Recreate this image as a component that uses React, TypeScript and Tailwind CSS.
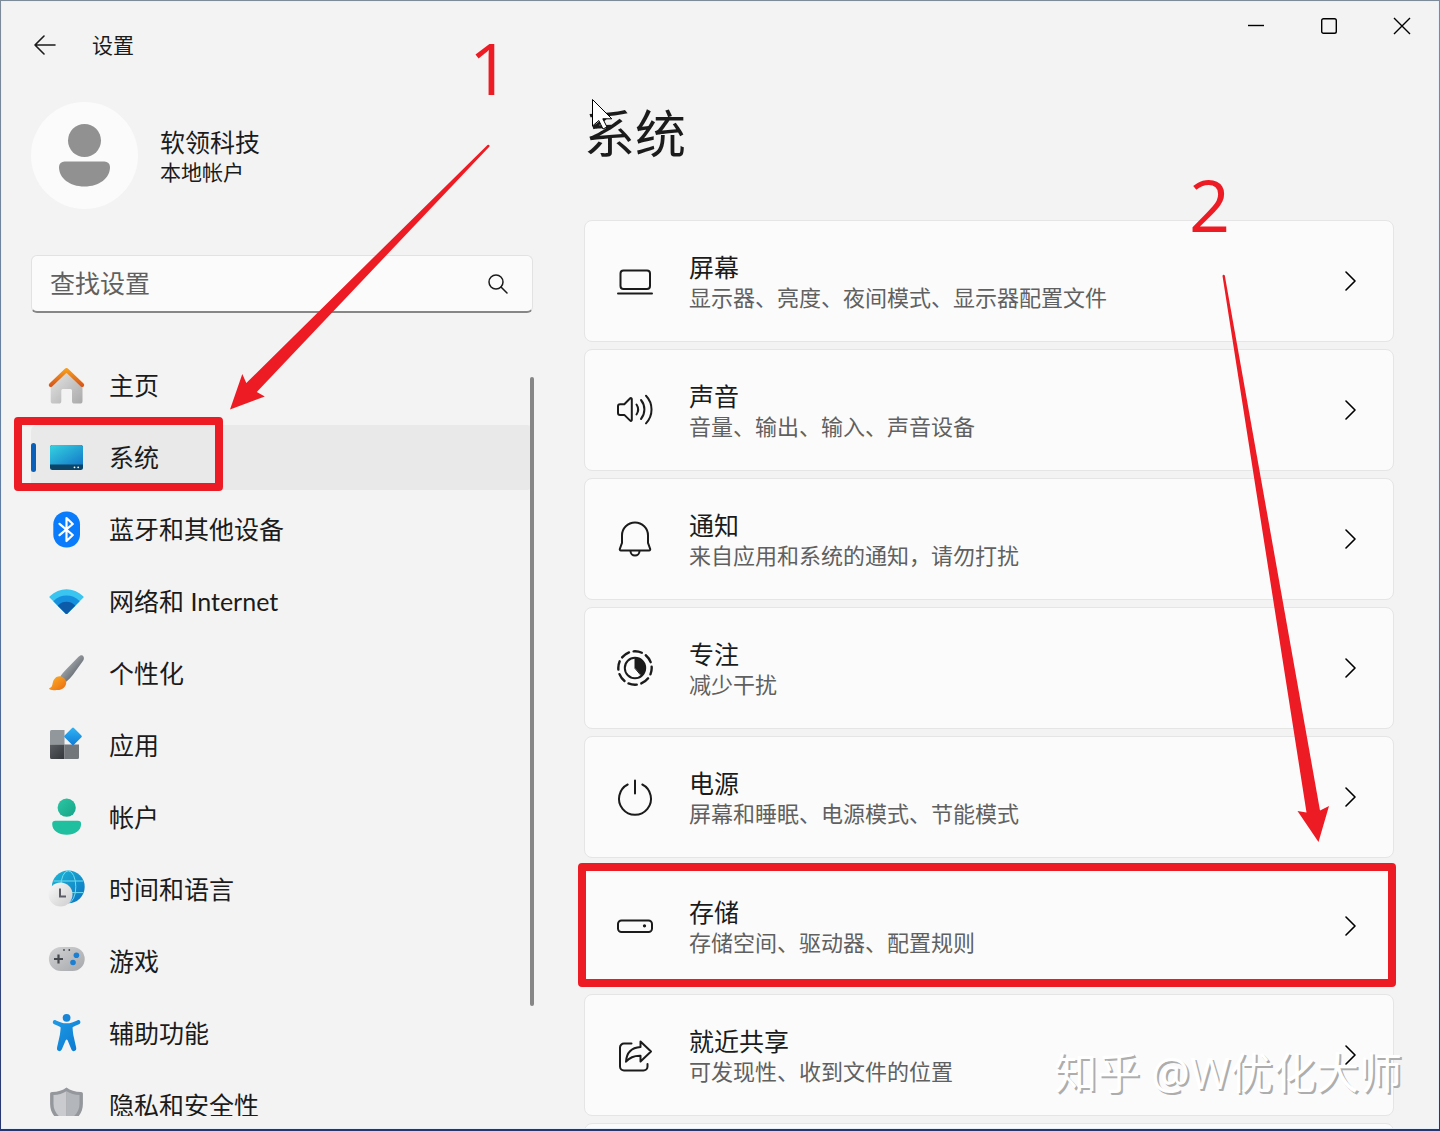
import type { ReactNode } from "react";

function HomeIcon() {
  return (
    <svg viewBox="0 0 36 36" className="size-9 overflow-visible" aria-hidden="true">
      <defs>
        <linearGradient id="homeWall" x1="0" y1="0" x2="1" y2="1">
          <stop offset="0" stopColor="#e6e6e6" />
          <stop offset="1" stopColor="#a9a9a9" />
        </linearGradient>
        <linearGradient id="homeRoof" x1="0" y1="0" x2="0" y2="1">
          <stop offset="0" stopColor="#f59a1c" />
          <stop offset="1" stopColor="#d9591b" />
        </linearGradient>
      </defs>
      <path
        d="M18.5 4 34.5 19v14a2.6 2.6 0 0 1-2.6 2.6h-5.3A2.6 2.6 0 0 1 24 33V22.5a1.5 1.5 0 0 0-1.5-1.5h-7.7a1.5 1.5 0 0 0-1.5 1.5V33a2.6 2.6 0 0 1-2.6 2.6H5.3A2.6 2.6 0 0 1 2.7 33V19z"
        fill="url(#homeWall)"
      />
      <path
        d="M2.8 17 18.5 2 34.2 17"
        fill="none"
        stroke="url(#homeRoof)"
        strokeWidth="4"
        strokeLinecap="round"
        strokeLinejoin="round"
      />
    </svg>
  );
}

function SystemIcon() {
  return (
    <svg viewBox="0 0 36 36" className="size-9 overflow-visible" aria-hidden="true">
      <defs>
        <linearGradient id="sysScreen" x1="0" y1="0" x2="1" y2="1">
          <stop offset="0" stopColor="#35d3e0" />
          <stop offset="1" stopColor="#1479c9" />
        </linearGradient>
      </defs>
      <rect x="2" y="5" width="33" height="25" rx="2.5" fill="#0c4467" />
      <path d="M2 24.5v-17A2.5 2.5 0 0 1 4.5 5h28A2.5 2.5 0 0 1 35 7.5v17z" fill="url(#sysScreen)" />
      <circle cx="26.5" cy="27.3" r="0.9" fill="#fff" />
      <circle cx="30.2" cy="27.3" r="0.9" fill="#fff" />
    </svg>
  );
}

function BluetoothIcon() {
  return (
    <svg viewBox="0 0 36 36" className="size-9 overflow-visible" aria-hidden="true">
      <rect x="5.3" y="-0.5" width="26.7" height="36" rx="13" fill="#0a7bfa" />
      <path
        d="M11.5 11.8 24.8 23l-6.3 6V6l6.3 6L11.5 23.2"
        fill="none"
        stroke="#fff"
        strokeWidth="2.2"
        strokeLinejoin="round"
        strokeLinecap="round"
      />
    </svg>
  );
}

function WifiIcon() {
  return (
    <svg viewBox="0 0 36 36" className="size-9 overflow-visible" aria-hidden="true">
      <defs>
        <clipPath id="wifiFan">
          <path d="M1.8 13.8a1 1 0 0 1 0-1.5C11.5 3 25.5 3 35.2 12.3a1 1 0 0 1 0 1.5L19.5 29.4a1.4 1.4 0 0 1-2 0z" />
        </clipPath>
      </defs>
      <g clipPath="url(#wifiFan)">
        <rect width="37" height="36" fill="#3ac4f0" />
        <circle cx="18.5" cy="29.5" r="18" fill="#1490df" />
        <circle cx="18.5" cy="29.5" r="11.8" fill="#0d5aa8" />
      </g>
    </svg>
  );
}

function BrushIcon() {
  return (
    <svg viewBox="0 0 36 36" className="size-9 overflow-visible" aria-hidden="true">
      <defs>
        <linearGradient id="brushHandle" x1="0" y1="0" x2="1" y2="1">
          <stop offset="0.3" stopColor="#a3a8ad" />
          <stop offset="0.7" stopColor="#686d73" />
        </linearGradient>
        <linearGradient id="brushTip" x1="0" y1="0" x2="1" y2="1">
          <stop offset="0" stopColor="#fdb326" />
          <stop offset="1" stopColor="#ea6a12" />
        </linearGradient>
      </defs>
      <path
        d="M34.8-.3c1.5 1.3 1.4 3.2.3 5L25 18.8c-2 2.5-4.3 4.9-6.8 7l-5.9-5.5C14 17.8 16 15.5 18.3 13.3L30.5.8c1.5-1.5 3-2.1 4.3-1.1z"
        fill="url(#brushHandle)"
      />
      <path
        d="M12.2 20.2c3.2.5 5.5 2.7 6 5.7.2 4.5-3.5 8-9 8.2-3 .2-6-.1-7.7-.9-.6-.4-.4-1 .2-1.2 2.2-.8 2.5-2.5 3-5 .8-4.3 3.8-7.2 7.5-6.8z"
        fill="url(#brushTip)"
      />
    </svg>
  );
}

function AppsIcon() {
  return (
    <svg viewBox="0 0 36 36" className="size-9 overflow-visible" aria-hidden="true">
      <defs>
        <linearGradient id="appsDiamond" x1="0" y1="0" x2="1" y2="1">
          <stop offset="0" stopColor="#31b5f5" />
          <stop offset="1" stopColor="#0f7bd6" />
        </linearGradient>
        <linearGradient id="appsDark" x1="0" y1="0" x2="1" y2="1">
          <stop offset="0" stopColor="#595c60" />
          <stop offset="1" stopColor="#33363a" />
        </linearGradient>
      </defs>
      <path d="M3.5 2h13v14.5H2v-13A1.5 1.5 0 0 1 3.5 2z" fill="#92979c" />
      <path d="M2 16.5h14.5V31h-13A1.5 1.5 0 0 1 2 29.5z" fill="url(#appsDark)" />
      <path d="M16.5 16.5H31v13a1.5 1.5 0 0 1-1.5 1.5h-13z" fill="#72777c" />
      <rect
        x="18.4"
        y="1.8"
        width="13.2"
        height="13.2"
        rx="1.3"
        transform="rotate(45 25 8.4)"
        fill="url(#appsDiamond)"
      />
    </svg>
  );
}

function AccountIcon() {
  return (
    <svg viewBox="0 0 36 36" className="size-9 overflow-visible" aria-hidden="true">
      <defs>
        <linearGradient id="accountFill" x1="0" y1="0" x2="1" y2="1">
          <stop offset="0" stopColor="#2bc7a4" />
          <stop offset="1" stopColor="#17a387" />
        </linearGradient>
      </defs>
      <circle cx="18.7" cy="7.7" r="9.1" fill="url(#accountFill)" />
      <path
        d="M7.5 20.7h22.3a3.3 3.3 0 0 1 3.3 3.3c0 6.5-6 10.7-14.4 10.7S4.2 30.5 4.2 24a3.3 3.3 0 0 1 3.3-3.3z"
        fill="#1fbf9f"
      />
    </svg>
  );
}

function TimeIcon() {
  return (
    <svg viewBox="0 0 36 36" className="size-9 overflow-visible" aria-hidden="true">
      <defs>
        <linearGradient id="globeFill" x1="0" y1="0" x2="1" y2="1">
          <stop offset="0" stopColor="#20b8d4" />
          <stop offset="1" stopColor="#0b72c4" />
        </linearGradient>
        <linearGradient id="clockFill" x1="0" y1="0" x2="1" y2="1">
          <stop offset="0" stopColor="#fafafa" />
          <stop offset="1" stopColor="#cdcdcf" />
        </linearGradient>
      </defs>
      <circle cx="20.3" cy="14.8" r="16.4" fill="url(#globeFill)" />
      <g fill="none" stroke="#6fdcf0" strokeWidth="1">
        <ellipse cx="20.3" cy="14.8" rx="7.5" ry="16" />
        <path d="M5.5 9h29.8M5.5 20.6h29.8" />
      </g>
      <circle cx="12.5" cy="22.5" r="12" fill="url(#clockFill)" />
      <path d="M12 16.5v8h6" fill="none" stroke="#5c5c66" strokeWidth="2" />
    </svg>
  );
}

function GameIcon() {
  return (
    <svg viewBox="0 0 36 36" className="size-9 overflow-visible" aria-hidden="true">
      <defs>
        <linearGradient id="padFill" x1="0" y1="0" x2="1" y2="1">
          <stop offset="0" stopColor="#d2d3d5" />
          <stop offset="1" stopColor="#a5a7aa" />
        </linearGradient>
      </defs>
      <rect x="0.9" y="3" width="35.8" height="24" rx="12" fill="url(#padFill)" />
      <path d="M6 15h9M10.5 10.5v9" stroke="#45484c" strokeWidth="2.2" />
      <circle cx="28.4" cy="11.3" r="2.8" fill="#1c7fd1" />
      <circle cx="25" cy="18.5" r="2.8" fill="#1c7fd1" />
      <circle cx="16" cy="6" r="0.9" fill="#45484c" />
      <circle cx="21.3" cy="6" r="0.9" fill="#45484c" />
    </svg>
  );
}

function AccessibilityIcon() {
  return (
    <svg viewBox="0 0 36 36" className="size-9 overflow-visible" aria-hidden="true">
      <defs>
        <linearGradient id="accessFill" x1="0" y1="0" x2="1" y2="1">
          <stop offset="0" stopColor="#1f9be6" />
          <stop offset="1" stopColor="#0b78d0" />
        </linearGradient>
      </defs>
      <circle cx="18.6" cy="1.8" r="3.9" fill="#1786d8" />
      <path
        d="M5 5.3c.5-1.2 1.8-1.5 3-.9 3.3 1.5 6.8 2.9 10.6 2.9S26 5.9 29.2 4.4c1.2-.6 2.5-.3 3 .9.5 1.3 0 2.5-1.2 3-2.2 1-4 1.8-5.6 2.4-.7.3-.9.8-.8 1.5.3 3.3.5 6.3 1.3 9.3l2.2 9.8c.5 2-.2 3.4-1.7 3.8-1.6.3-2.7-.6-3.3-2.3l-3.5-8.6c-.4-.9-1.5-.9-1.9 0l-3.6 8.6c-.7 1.7-1.8 2.6-3.3 2.3-1.5-.4-2.2-1.8-1.7-3.8l2.2-9.8c.8-3 1-6 1.3-9.3.1-.7-.1-1.2-.8-1.5-1.6-.6-3.4-1.4-5.6-2.4-1.2-.5-1.7-1.7-1.2-3z"
        fill="url(#accessFill)"
      />
    </svg>
  );
}

function ShieldIcon() {
  return (
    <svg viewBox="0 0 36 36" className="size-9 overflow-visible" aria-hidden="true">
      <path
        d="M18.5-.5c4 3 8.5 4.3 14.5 4.5 1.2 0 1.9.7 1.9 1.9V16c0 9.5-6 16.5-16.4 20C8 32.5 2.1 25.5 2.1 16V5.9C2.1 4.7 2.8 4 4 4c6-.2 10.5-1.5 14.5-4.5z"
        fill="#94979b"
      />
      <path d="M18.5 3.2c-4 2.4-8 3.5-13 3.8V16c0 7.5 4.6 13.3 13 16.5z" fill="#c9cbce" />
      <path d="M18.5 3.2c4 2.4 8 3.5 13 3.8V16c0 7.5-4.6 13.3-13 16.5z" fill="#b3b6ba" />
    </svg>
  );
}

function LineIcon({ children }: { children: ReactNode }) {
  return (
    <svg
      viewBox="0 0 36 36"
      className="size-9 shrink-0 overflow-visible"
      fill="none"
      stroke="#1b1b1b"
      strokeWidth="2"
      strokeLinecap="round"
      strokeLinejoin="round"
      aria-hidden="true"
    >
      {children}
    </svg>
  );
}

const displayIcon = (
  <LineIcon>
    <rect x="3.5" y="7.5" width="29.5" height="18.5" rx="3" />
    <path d="M1 30.5h34" />
  </LineIcon>
);

const soundIcon = (
  <LineIcon>
    <path d="M7.3 12.3H3a2 2 0 0 0-2 2v6.6a2 2 0 0 0 2 2h4.3l5.9 5.7c.6.6 1.6.2 1.6-.7V7c0-.9-1-1.3-1.6-.7z" />
    <path d="M19.5 12.500a9 9 0 0 1 0 10M24 8a15 15 0 0 1 0 19M29 3.800a20 20 0 0 1 0 27.600" />
  </LineIcon>
);

const bellIcon = (
  <LineIcon>
    <path d="M18 1.5a13 13 0 0 0-13 13v7.3L2.8 28c-.2.7.2 1.4 1 1.4h28.4c.8 0 1.2-.7 1-1.4L31 21.8v-7.3a13 13 0 0 0-13-13z" />
    <path d="M13.5 30a4.5 4.5 0 0 0 9 0" />
  </LineIcon>
);

const focusIcon = (
  <LineIcon>
    <circle cx="18" cy="18" r="16.7" strokeWidth="2.4" strokeDasharray="8.5 4.62" strokeDashoffset="2" />
    <circle cx="18" cy="18" r="10.2" />
    <path d="M18 18V8a10 10 0 0 1 6.5 17.5z" fill="#1b1b1b" strokeWidth="1" />
  </LineIcon>
);

const powerIcon = (
  <LineIcon>
    <path d="M18 1.5v13M10.7 5.5a16 16 0 1 0 14.6 0" />
  </LineIcon>
);

const storageIcon = (
  <LineIcon>
    <rect x="1" y="12.5" width="34" height="11.5" rx="3.5" />
    <circle cx="27.5" cy="17.8" r="0.9" fill="#1b1b1b" strokeWidth="1.5" />
  </LineIcon>
);

const shareIcon = (
  <LineIcon>
    <path d="M14.5 6.5H7a4 4 0 0 0-4 4v19a4 4 0 0 0 4 4h19.5a4 4 0 0 0 4-4V27" />
    <path d="M23.5 4.5 34 14.5l-10.500 10v-5.800c-6-.2-10.5 1.300-14.500 6 .5-9 5.500-14.200 14.500-14.800z" />
  </LineIcon>
);

const navItems = [
  { label: "主页", icon: <HomeIcon /> },
  { label: "系统", icon: <SystemIcon />, active: true },
  { label: "蓝牙和其他设备", icon: <BluetoothIcon /> },
  { label: "网络和 Internet", icon: <WifiIcon /> },
  { label: "个性化", icon: <BrushIcon /> },
  { label: "应用", icon: <AppsIcon /> },
  { label: "帐户", icon: <AccountIcon /> },
  { label: "时间和语言", icon: <TimeIcon /> },
  { label: "游戏", icon: <GameIcon /> },
  { label: "辅助功能", icon: <AccessibilityIcon /> },
  { label: "隐私和安全性", icon: <ShieldIcon /> },
];

const cards = [
  { title: "屏幕", desc: "显示器、亮度、夜间模式、显示器配置文件", icon: displayIcon },
  { title: "声音", desc: "音量、输出、输入、声音设备", icon: soundIcon },
  { title: "通知", desc: "来自应用和系统的通知，请勿打扰", icon: bellIcon },
  { title: "专注", desc: "减少干扰", icon: focusIcon },
  { title: "电源", desc: "屏幕和睡眠、电源模式、节能模式", icon: powerIcon },
  { title: "存储", desc: "存储空间、驱动器、配置规则", icon: storageIcon, marked: true },
  { title: "就近共享", desc: "可发现性、收到文件的位置", icon: shareIcon },
];

function TitleBar() {
  return (
    <header className="flex h-[86px] shrink-0 items-start justify-between">
      <div className="flex h-[86px] items-center gap-9 pl-8">
        <button type="button" aria-label="返回">
          <svg viewBox="0 0 22 20" className="h-5 w-[22px]" fill="none" stroke="#1b1b1b" strokeWidth="1.6" strokeLinecap="round" strokeLinejoin="round">
            <path d="M21 10H1M10 1 1 10l9 9" />
          </svg>
        </button>
        <span className="text-[21px]">设置</span>
      </div>
      <div className="flex">
        <button type="button" aria-label="最小化" className="flex h-12 w-[73px] items-center justify-center">
          <svg viewBox="0 0 16 16" className="size-4" stroke="#000" strokeWidth="1.4">
            <path d="M0 7.5h16" />
          </svg>
        </button>
        <button type="button" aria-label="最大化" className="flex h-12 w-[73px] items-center justify-center">
          <svg viewBox="0 0 16 16" className="size-4" fill="none" stroke="#000" strokeWidth="1.4">
            <rect x="0.7" y="0.7" width="14.6" height="14.6" rx="1.8" />
          </svg>
        </button>
        <button type="button" aria-label="关闭" className="flex h-12 w-[73px] items-center justify-center">
          <svg viewBox="0 0 16 16" className="size-4 overflow-visible" stroke="#000" strokeWidth="1.4">
            <path d="M0 0l16 16M16 0 0 16" />
          </svg>
        </button>
      </div>
    </header>
  );
}

function Sidebar() {
  return (
    <aside className="flex w-[502px] shrink-0 flex-col pb-3">
      <div className="mt-3.5 flex items-center gap-[22px]">
        <div className="flex size-[107px] items-center justify-center rounded-full bg-[#fbfbfb]">
          <svg viewBox="0 0 52 64" className="h-16 w-[52px]" fill="#919191" aria-hidden="true">
            <circle cx="25.5" cy="16.5" r="16.5" />
            <path d="M5.5 37.5h40a5.500 5.500 0 0 1 5.500 5.500c0 11-10.500 19.500-25.500 19.500S0 54 0 43a5.500 5.500 0 0 1 5.500-5.500z" />
          </svg>
        </div>
        <div>
          <p className="text-[25px] leading-8">软领科技</p>
          <p className="text-[21px] leading-7">本地帐户</p>
        </div>
      </div>

      <div className="mt-[46px] flex h-[58px] shrink-0 items-center rounded-md border border-[#e2e2e2] border-b-2 border-b-[#868686] bg-[#fbfbfb] pr-6 pl-[18px]">
        <input
          type="text"
          aria-label="查找设置"
          placeholder="查找设置"
          className="min-w-0 flex-1 bg-transparent text-[25px] outline-none placeholder:text-[#606060]"
        />
        <svg viewBox="0 0 20 20" className="size-5" fill="none" stroke="#1b1b1b" strokeWidth="1.5" strokeLinecap="round" aria-hidden="true">
          <circle cx="8" cy="8" r="7" />
          <path d="M13 13l6 6" />
        </svg>
      </div>

      {/* Navigation */}
      <div className="relative mt-6 flex min-h-0 flex-1">
        <nav className="-mx-5 flex flex-1 flex-col gap-[7px] overflow-hidden px-5 pt-4">
          {navItems.map((item) => (
            <a
              key={item.label}
              href="#"
              className={`relative flex h-[65px] shrink-0 items-center gap-[25px] rounded-md pl-[17px] text-[25px] leading-7 ${
                item.active ? "bg-[#e9e9e9]" : ""
              }`}
            >
              {item.icon}
              <span className="pb-0.5">{item.label}</span>
              {item.active && (
                <>
                  <span className="absolute top-[18px] left-0 h-[29px] w-[5px] rounded-full bg-[#0a5fb8]" />
                  <span className="absolute -top-2 -left-[17px] h-[74px] w-[209px] rounded border-8 border-[#ed1c24]" />
                </>
              )}
            </a>
          ))}
        </nav>
        <div className="absolute top-10 -right-px h-[629px] w-1 rounded-full bg-[#868686]" />
      </div>
    </aside>
  );
}

function SettingCard({ title, desc, icon, marked }: { title: string; desc: string; icon: ReactNode; marked?: boolean }) {
  return (
    <a
      href="#"
      className="relative flex h-[122px] shrink-0 items-center gap-9 rounded-lg border border-[#e5e5e5] bg-[#fbfbfb] pr-9 pl-8"
    >
      {icon}
      <div className="flex-1 pt-0.5">
        <p className="text-[25px] leading-8">{title}</p>
        <p className="text-[22px] leading-[30px] text-[#606060]">{desc}</p>
      </div>
      <svg viewBox="0 0 12 20" className="h-5 w-3" fill="none" stroke="#000" strokeWidth="1.6" strokeLinecap="round" strokeLinejoin="round" aria-hidden="true">
        <path d="M1 1 10 10l-9 9" />
      </svg>
      {marked && <span className="absolute -top-[3px] -right-[3px] -bottom-px -left-[7px] rounded border-8 border-[#ed1c24]" />}
    </a>
  );
}

function Annotations() {
  return (
    <div className="pointer-events-none absolute inset-0 overflow-hidden text-[#ed1c24]">
      <span className="absolute top-[17px] left-[469px] font-['Open_Sans'] text-[72px] leading-[100px]">1</span>
      <span className="absolute top-[154px] left-[1189px] font-['Open_Sans'] text-[72px] leading-[100px]">2</span>
      <svg viewBox="0 0 1440 1131" className="absolute top-0 left-0 h-[1131px] w-[1440px] max-w-none" fill="#ed1c24" aria-hidden="true">
        <path d="M230 409.5 242.3 374l4 9L487.5 145a1.3 1.3 0 0 1 2 1.5L256.8 392l8 4.5z" />
        <path d="M1318.5 842 1297.5 811l9 1.5L1222.5 276a1.2 1.2 0 0 1 2.3-.5L1320 810.5l9-4.5z" />
        <path
          d="M592.5 99.5v26.5l6.3-5.5 4.2 8.5 4-2-4.2-8.2h9z"
          fill="#fff"
          stroke="#000"
          strokeWidth="1"
        />
      </svg>
      <span className="absolute right-[38px] bottom-7 font-['Noto_Sans','Noto_Sans_CJK_SC',sans-serif] text-[43px] leading-[60px] whitespace-nowrap text-white [text-shadow:2px_2px_0_#adadad]">
        知乎 @W优化大师
      </span>
    </div>
  );
}

export default function App() {
  return (
    <div className="relative h-screen overflow-hidden bg-linear-to-b from-[#7d8a98] via-[#5c7ba3] to-[#27356e] p-px pb-0.5 font-['Lato','Noto_Sans_CJK_SC',sans-serif] text-[#1b1b1b]">
      <div className="flex h-full flex-col border border-[#e6f0f8] bg-[#f3f3f3]">
        <TitleBar />
        <div className="flex min-h-0 flex-1 gap-[51px] pr-11 pl-[29px]">
          <Sidebar />
          <main className="flex min-w-0 flex-1 flex-col">
            <h1 className="mt-2 text-[51px] leading-[76px]">系统</h1>
            <div className="-mx-3 mt-12 flex min-h-0 flex-1 flex-col gap-[7px] overflow-hidden px-3">
              {cards.map((card) => (
                <SettingCard key={card.title} {...card} />
              ))}
              <div className="h-[122px] shrink-0 rounded-lg border border-[#e5e5e5] bg-[#fbfbfb]" />
            </div>
          </main>
        </div>
      </div>
      <Annotations />
    </div>
  );
}
